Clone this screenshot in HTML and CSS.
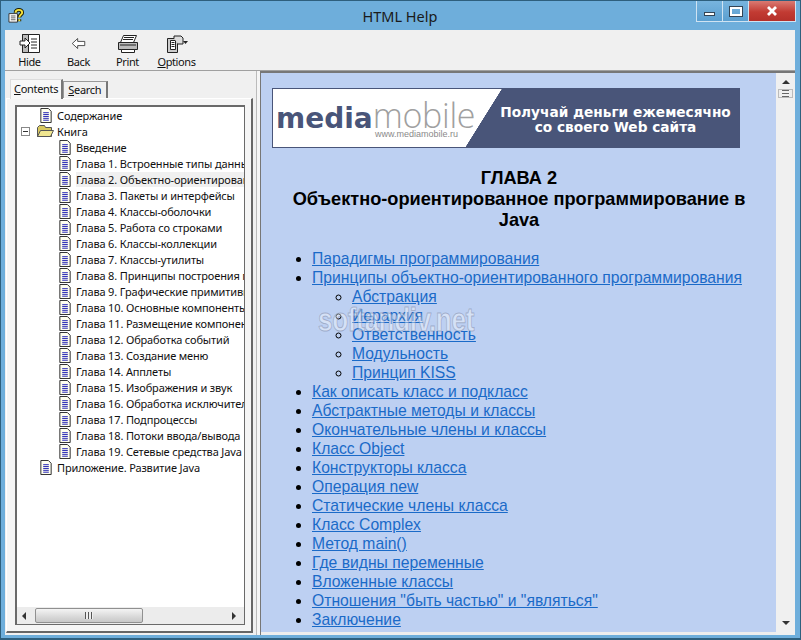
FILE: index.html
```html
<!DOCTYPE html>
<html lang="en">

<head>
    <meta charset="UTF-8">
    <title>HTML Help</title>
    <link rel="stylesheet" href="styles.css">
</head>

<body>
    <div class="window">
        <div class="titlebar">
            <svg class="appIcon" width="17" height="17" viewBox="0 0 18 18">
                <path d="M1 7h9v9H1z" fill="#fff" stroke="#333" />
                <path d="M3 9.500h5M3 11.500h5M3 13.500h5" stroke="#555" />
                <path d="M8 6c0-4 7-4 7 0 0 2-3 2-3 5M12 13v2" fill="none" stroke="#1a1a00" stroke-width="4" />
                <path d="M8 6c0-4 7-4 7 0 0 2-3 2-3 5M12 13v2" fill="none" stroke="#f5e23a" stroke-width="2" />
            </svg>
            <div class="title">HTML Help</div>
            <div class="winButtons">
                <div class="winBtn"><span class="minIcon"></span></div>
                <div class="winBtn"><span class="maxIcon"></span></div>
                <div class="closeBtn">
                    <svg width="14" height="10" viewBox="0 0 14 10"><path d="M3 1l8 8M11 1l-8 8" stroke="#fff" stroke-width="2.800" /></svg>
                </div>
            </div>
        </div>

        <div class="toolbar">
            <div class="tool">
                <svg width="22" height="20" viewBox="0 0 22 20">
                    <path d="M3.500 .5h17v18h-17z" fill="#fff" stroke="#222" />
                    <path d="M3.500 .5h6v18h-6z" fill="#bbb" stroke="#222" />
                    <path d="M12 5h6M12 8h6M12 11h6M12 14h6" stroke="#222" />
                    <path d="M1 7h5V4l5 5-5 5v-3H1z" fill="#fff" stroke="#222" />
                </svg>
                <span>Hide</span>
            </div>
            <div class="tool">
                <svg class="backIcon" width="15" height="13" viewBox="0 0 18 14"><path d="M8 1L1.500 7 8 13V9.500h8.500v-5H8z" fill="#fff" stroke="#333" /></svg>
                <span>Back</span>
            </div>
            <div class="tool">
                <svg width="22" height="20" viewBox="0 0 22 20">
                    <path d="M6.500 1.500h13l-3 7h-13z" fill="#fff" stroke="#222" />
                    <path d="M7 3.500h10M6 5.500h10" stroke="#222" />
                    <path d="M1.500 8.500h19v7h-19z" fill="#bbb" stroke="#222" />
                    <path d="M4.500 15.500h13v3h-13z" fill="#fff" stroke="#222" />
                    <path d="M3 11h16" stroke="#222" />
                </svg>
                <span>Print</span>
            </div>
            <div class="tool">
                <svg width="22" height="20" viewBox="0 0 22 20">
                    <path d="M1.500 4.500h10v14h-10z" fill="#ccc" stroke="#222" />
                    <path d="M4.500 6.500h5v9h-5z" fill="#fff" stroke="#222" />
                    <path d="M5.500 8.500h3M5.500 10.500h3M5.500 12.500h3" stroke="#222" />
                    <path d="M8 4V2h7l2 2v6h-5" fill="#ddd" stroke="#222" />
                    <path d="M17 7h5l-2.500 3z" fill="#222" />
                </svg>
                <span><u>O</u>ptions</span>
            </div>
        </div>

        <div class="main">
            <div class="sidePanel">
                <div class="tabs">
                    <div class="tab activeTab"><u>C</u>ontents</div>
                    <div class="tab"><u>S</u>earch</div>
                </div>
                <div class="tabBody">
                    <div class="treeBox">
                        <div class="tree" id="tree">
                            <div class="row lvl0"><svg class="page"><use href="#pageIcon" /></svg>Содержание</div>
                            <div class="row lvlBook">
                                <span class="minusBox"></span>
                                <svg class="folder" width="18" height="14" viewBox="0 0 18 14">
                                    <path d="M1.500 3.500l2-2h5l1 2h6v9h-14z" fill="#d8c860" stroke="#555" />
                                    <path d="M1.500 12.500l3-6h13l-3 6z" fill="#f0e690" stroke="#555" />
                                </svg>
                                Книга
                            </div>
                            <div class="row lvl1"><svg class="page"><use href="#pageIcon" /></svg>Введение</div>
                            <div class="row lvl1"><svg class="page"><use href="#pageIcon" /></svg>Глава 1. Встроенные типы данных, операции над ними</div>
                            <div class="row lvl1"><svg class="page"><use href="#pageIcon" /></svg><span class="selected">Глава 2. Объектно-ориентированное программирование</span></div>
                            <div class="row lvl1"><svg class="page"><use href="#pageIcon" /></svg>Глава 3. Пакеты и интерфейсы</div>
                            <div class="row lvl1"><svg class="page"><use href="#pageIcon" /></svg>Глава 4. Классы-оболочки</div>
                            <div class="row lvl1"><svg class="page"><use href="#pageIcon" /></svg>Глава 5. Работа со строками</div>
                            <div class="row lvl1"><svg class="page"><use href="#pageIcon" /></svg>Глава 6. Классы-коллекции</div>
                            <div class="row lvl1"><svg class="page"><use href="#pageIcon" /></svg>Глава 7. Классы-утилиты</div>
                            <div class="row lvl1"><svg class="page"><use href="#pageIcon" /></svg>Глава 8. Принципы построения графического интерфейса</div>
                            <div class="row lvl1"><svg class="page"><use href="#pageIcon" /></svg>Глава 9. Графические примитивы</div>
                            <div class="row lvl1"><svg class="page"><use href="#pageIcon" /></svg>Глава 10. Основные компоненты</div>
                            <div class="row lvl1"><svg class="page"><use href="#pageIcon" /></svg>Глава 11. Размещение компонентов</div>
                            <div class="row lvl1"><svg class="page"><use href="#pageIcon" /></svg>Глава 12. Обработка событий</div>
                            <div class="row lvl1"><svg class="page"><use href="#pageIcon" /></svg>Глава 13. Создание меню</div>
                            <div class="row lvl1"><svg class="page"><use href="#pageIcon" /></svg>Глава 14. Апплеты</div>
                            <div class="row lvl1"><svg class="page"><use href="#pageIcon" /></svg>Глава 15. Изображения и звук</div>
                            <div class="row lvl1"><svg class="page"><use href="#pageIcon" /></svg>Глава 16. Обработка исключительных ситуаций</div>
                            <div class="row lvl1"><svg class="page"><use href="#pageIcon" /></svg>Глава 17. Подпроцессы</div>
                            <div class="row lvl1"><svg class="page"><use href="#pageIcon" /></svg>Глава 18. Потоки ввода/вывода</div>
                            <div class="row lvl1"><svg class="page"><use href="#pageIcon" /></svg>Глава 19. Сетевые средства Java</div>
                            <div class="row lvl0"><svg class="page"><use href="#pageIcon" /></svg>Приложение. Развитие Java</div>
                        </div>
                        <div class="hScroll">
                            <span class="arrowLeft"></span>
                            <div class="hThumb"><span class="grip"></span></div>
                            <span class="arrowRight"></span>
                        </div>
                    </div>
                </div>
            </div>

            <div class="splitter"></div>

            <div class="content">
                <div class="page-body">
                    <div class="banner">
                        <div class="bannerLogo">
                            <div class="logoText"><b>media</b>mobile</div>
                            <div class="logoUrl">www.mediamobile.ru</div>
                        </div>
                        <div class="bannerText">Получай деньги ежемесячно<br>со своего Web сайта</div>
                    </div>
                    <h2>ГЛАВА 2<br>Объектно-ориентированное программирование в Java</h2>
                    <ul class="toc">
                        <li><a href="#">Парадигмы программирования</a></li>
                        <li><a href="#">Принципы объектно-ориентированного программирования</a>
                            <ul>
                                <li><a href="#">Абстракция</a></li>
                                <li><a href="#">Иерархия</a></li>
                                <li><a href="#">Ответственность</a></li>
                                <li><a href="#">Модульность</a></li>
                                <li><a href="#">Принцип KISS</a></li>
                            </ul>
                        </li>
                        <li><a href="#">Как описать класс и подкласс</a></li>
                        <li><a href="#">Абстрактные методы и классы</a></li>
                        <li><a href="#">Окончательные члены и классы</a></li>
                        <li><a href="#">Класс Object</a></li>
                        <li><a href="#">Конструкторы класса</a></li>
                        <li><a href="#">Операция new</a></li>
                        <li><a href="#">Статические члены класса</a></li>
                        <li><a href="#">Класс Complex</a></li>
                        <li><a href="#">Метод main()</a></li>
                        <li><a href="#">Где видны переменные</a></li>
                        <li><a href="#">Вложенные классы</a></li>
                        <li><a href="#">Отношения "быть частью" и "являться"</a></li>
                        <li><a href="#">Заключение</a></li>
                    </ul>
                    <div class="watermark">softandiv.net</div>
                </div>
                <div class="vScroll">
                    <span class="arrowUp"></span>
                    <span class="vThumb"></span>
                    <span class="vSpace"></span>
                    <span class="arrowDown"></span>
                </div>
            </div>
        </div>
    </div>

    <svg class="defs" width="0" height="0">
        <symbol id="pageIcon" viewBox="0 0 12 16">
            <path d="M.5.5h8l3 3v12H.5z" fill="#fffff0" stroke="#222" />
            <path d="M3 5h6M3 7h6M3 9h6M3 11h6M3 13h6" stroke="#1a1ab0" />
        </symbol>
    </svg>
</body>

</html>
```

FILE: styles.css
```css
* {
    margin: 0;
    padding: 0;
    box-sizing: border-box;
}

body {
    font-family: "Liberation Sans", Arial, sans-serif;
    overflow: hidden;
    background-color: #1c3f55;
}

.window {
    width: 801px;
    height: 640px;
    display: flex;
    flex-direction: column;
    background-color: #6eaedb;
    border: 1px solid #2e5f7d;
    border-bottom-width: 2px;
    padding: 0 5px 3px 4px;
}

.titlebar {
    height: 29px;
    display: grid;
    grid-template-columns: 1fr auto 1fr;
    align-items: center;
    flex-shrink: 0;
}

.appIcon {
    margin-left: 3px;
}

.title {
    font-family: "Noto Sans", sans-serif;
    font-size: 14.500px;
    color: #1a1a1a;
}

.winButtons {
    justify-self: end;
    align-self: start;
    display: flex;
    width: 100px;
    height: 21px;
    border: 1px solid #cfe3f2;
    border-top: none;
    margin-right: -1px;
}

.winBtn {
    flex: 0 0 26px;
    display: flex;
    align-items: center;
    justify-content: center;
    background: linear-gradient(#78b4de, #5b9fd0);
    border-right: 1px solid #cfe3f2;
}

.closeBtn {
    flex: 1;
    display: flex;
    align-items: center;
    justify-content: center;
    background: linear-gradient(#d97a72, #c23b33 55%, #b5302a);
}

.minIcon {
    width: 11px;
    height: 4px;
    margin-top: 6px;
    background-color: #fff;
    border: 1px solid #345;
}

.maxIcon {
    width: 12px;
    height: 9px;
    border: 2px solid #fff;
    outline: 1px solid #345;
}

.toolbar {
    height: 41px;
    display: flex;
    flex-shrink: 0;
    background-color: #f0f0f0;
    border-bottom: 1px solid #a0a0a0;
}

.tool {
    width: 49px;
    display: flex;
    flex-direction: column;
    align-items: center;
    justify-content: flex-end;
    font-family: "Noto Sans", sans-serif;
    font-size: 11px;
    letter-spacing: -.4px;
    color: #111;
    line-height: 16px;
}

.backIcon {
    margin-bottom: 4px;
}

.main {
    flex: 1;
    display: flex;
    min-height: 0;
    background-color: #f0f0f0;
}

.sidePanel {
    width: 251px;
    display: flex;
    flex-direction: column;
    padding: 8px 3px 2px 1px;
    flex-shrink: 0;
}

.tabs {
    display: flex;
    height: 19px;
    align-items: flex-end;
    padding-left: 4px;
    position: relative;
    z-index: 1;
    flex-shrink: 0;
}

.tab {
    font-family: "Noto Sans", sans-serif;
    font-size: 11px;
    letter-spacing: -.3px;
    height: 17px;
    line-height: 15px;
    padding: 0 5px 0 4px;
    background-color: #f0f0f0;
    border: 1px solid #999;
    border-right: 2px solid #777;
    border-bottom: none;
    color: #111;
}

.activeTab {
    height: 20px;
    line-height: 17px;
    padding: 0 3px;
    background-color: #f8f8f8;
    margin-bottom: -1px;
    border-left-color: #ddd;
    border-top-color: #ddd;
}

.tabBody {
    flex: 1;
    min-height: 0;
    background-color: #f5f5f5;
    border: 1px solid #fff;
    border-right: 2px solid #666;
    border-bottom: 2px solid #666;
    padding: 6px 6px 6px 8px;
}

.treeBox {
    height: 100%;
    display: flex;
    flex-direction: column;
    border: 2px solid #6a6a6a;
    border-right-width: 1px;
    border-bottom-width: 1px;
    background-color: #fff;
}

.tree {
    flex: 1;
    min-height: 0;
    overflow: hidden;
    font-family: "Noto Sans", sans-serif;
    font-size: 11px;
    letter-spacing: -.15px;
    color: #111;
}

.row {
    height: 16px;
    display: flex;
    align-items: center;
    white-space: nowrap;
}

.lvl0 {
    padding-left: 23px;
}

.lvlBook {
    padding-left: 4px;
}

.lvl1 {
    padding-left: 42px;
}

.page {
    width: 12px;
    height: 15px;
    margin-right: 5px;
    flex-shrink: 0;
}

.minusBox {
    width: 9px;
    height: 9px;
    border: 1px solid #888;
    margin-right: 6px;
    background: linear-gradient(#333, #333) center / 5px 1px no-repeat;
}

.folder {
    margin-right: 3px;
}

.selected {
    background-color: #f0f0f0;
}

.hScroll {
    height: 17px;
    flex-shrink: 0;
    display: flex;
    align-items: center;
    background-color: #ececec;
    padding: 0 8px 0 5px;
}

.hThumb {
    width: 108px;
    height: 15px;
    margin-left: 9px;
    border: 1px solid #909090;
    border-radius: 2px;
    background: linear-gradient(#f4f4f4, #d8d8d8 60%, #c8c8c8);
    display: flex;
    align-items: center;
    justify-content: center;
}

.grip {
    width: 8px;
    height: 7px;
    background: repeating-linear-gradient(90deg, #555 0 1px, #eee 1px 3px);
}

.arrowLeft {
    border: 4px solid transparent;
    border-left-width: 0;
    border-right: 4px solid #333;
}

.arrowRight {
    margin-left: auto;
    border: 4px solid transparent;
    border-right-width: 0;
    border-left: 4px solid #333;
}

.splitter {
    width: 5px;
    flex-shrink: 0;
    background-color: #f5f5f5;
    border-left: 1px solid #bbb;
    border-right: 1px solid #777;
}

.content {
    flex: 1;
    min-width: 0;
    display: flex;
    border-top: 2px solid #777;
}

.page-body {
    flex: 1;
    min-width: 0;
    overflow: hidden;
    position: relative;
    background-color: #bdd0f2;
    padding: 15px 10px 0 11px;
    border-bottom: 3px solid #eee;
}

.banner {
    width: 468px;
    height: 60px;
    display: flex;
    background: linear-gradient(122deg, #fff 45.500%, #495579 45.600%);
    border: 1px solid #495579;
}

.bannerLogo {
    width: 219px;
    padding-left: 3px;
    padding-top: 12px;
}

.logoText {
    font-family: "Open Sans", sans-serif;
    font-weight: 300;
    font-size: 34px;
    line-height: 28px;
    color: #a0a0a0;
    letter-spacing: -.3px;
    white-space: nowrap;
    margin-bottom: -4px;
}

.logoText b {
    font-family: "DejaVu Sans", sans-serif;
    font-size: 28px;
    letter-spacing: 0;
    color: #495579;
    font-weight: bold;
}

.logoUrl {
    font-size: 9px;
    line-height: 10px;
    color: #8a8a8a;
    text-align: right;
    padding-right: 34px;
}

.bannerText {
    flex: 1;
    font-family: "DejaVu Sans", sans-serif;
    font-weight: bold;
    font-size: 13.700px;
    line-height: 15px;
    text-align: center;
    color: #fff;
    padding-top: 16px;
    white-space: nowrap;
}

h2 {
    font-size: 18.200px;
    line-height: 21px;
    text-align: center;
    color: #000;
    margin-top: 20px;
    padding: 0 10px;
}

.toc {
    list-style: disc;
    font-size: 15.700px;
    line-height: 19px;
    margin-top: 18px;
    padding-left: 40px;
}

.toc ul {
    list-style: circle;
    padding-left: 40px;
}

.toc a {
    color: #1a6ac8;
    text-decoration: underline;
}

.watermark {
    position: absolute;
    left: 57px;
    top: 227px;
    font-family: "Liberation Sans", sans-serif;
    font-weight: bold;
    font-size: 34px;
    letter-spacing: -.5px;
    transform: scaleX(.77);
    transform-origin: left;
    color: rgba(255, 255, 255, .4);
    -webkit-text-stroke: 1px rgba(110, 120, 150, .45);
    pointer-events: none;
}

.vScroll {
    width: 19px;
    flex-shrink: 0;
    display: flex;
    flex-direction: column;
    align-items: center;
    background-color: #f0f0f0;
    padding: 7px 0 10px;
}

.arrowUp {
    border: 4px solid transparent;
    border-top-width: 0;
    border-bottom: 4px solid #333;
}

.vThumb {
    width: 15px;
    height: 9px;
    margin-top: 5px;
    background: repeating-linear-gradient(180deg, #666 0 1px, #f0f0f0 1px 3px) center / 7px 7px no-repeat, #eee;
    border: 1px solid #bbb;
}

.vSpace {
    flex: 1;
}

.arrowDown {
    border: 4px solid transparent;
    border-bottom-width: 0;
    border-top: 4px solid #333;
}

.defs {
    position: absolute;
}
```
